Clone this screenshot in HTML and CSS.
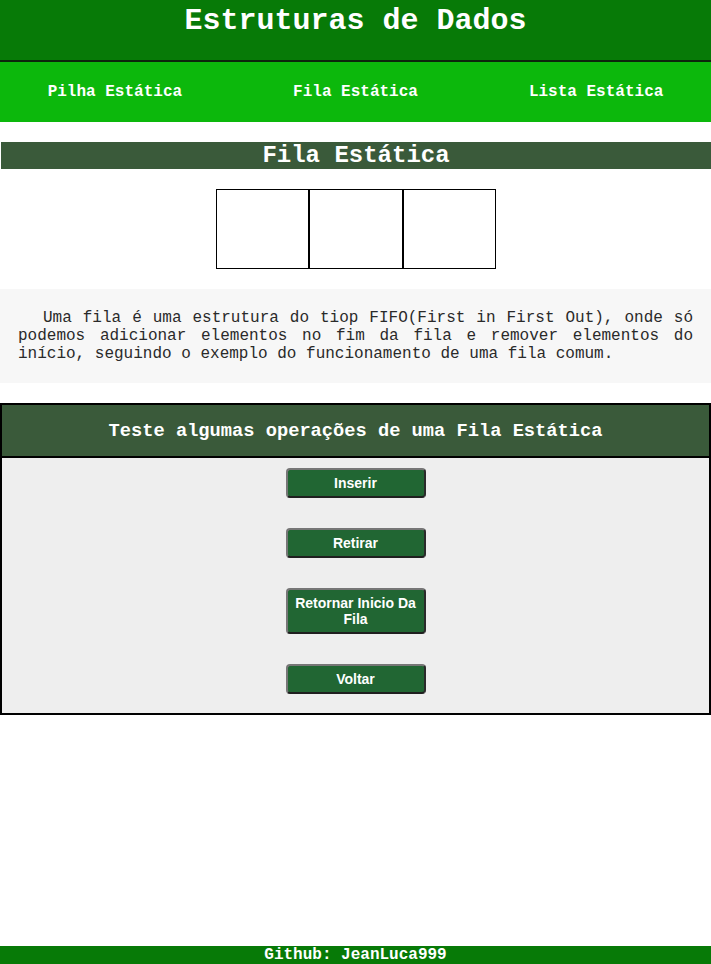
FILE: index.html
```
<!DOCTYPE html>
<html lang="pt-BR">
<head>
<meta charset="utf-8">
<title>Fila Estática</title>
<link rel="stylesheet" href="styles.css">
</head>
<body>
<header class="top">
  <h1 class="title">Estruturas de Dados</h1>
</header>
<nav class="nav">
  <a class="nav-link" href="#">Pilha Estática</a>
  <a class="nav-link" href="#">Fila Estática</a>
  <a class="nav-link" href="#">Lista Estática</a>
</nav>
<main class="main">
  <h2 class="section-title">Fila Estática</h2>
  <div class="queue">
    <div class="cell"></div>
    <div class="cell"></div>
    <div class="cell"></div>
  </div>
  <section class="desc">
    <p class="desc-text">Uma fila é uma estrutura do tiop FIFO(First in First Out), onde só podemos adicionar elementos no fim da fila e remover elementos do início, seguindo o exemplo do funcionamento de uma fila comum.</p>
  </section>
  <section class="panel">
    <div class="panel-head">
      <h3 class="panel-title">Teste algumas operações de uma Fila Estática</h3>
    </div>
    <div class="panel-body">
      <button class="btn">Inserir</button>
      <button class="btn">Retirar</button>
      <button class="btn">Retornar Inicio Da Fila</button>
      <button class="btn">Voltar</button>
    </div>
  </section>
</main>
<footer class="footer">Github: JeanLuca999</footer>
</body>
</html>
```
FILE: styles.css
```
* { box-sizing: border-box; }
html, body { margin: 0; padding: 0; }
body {
  font-family: "Liberation Mono", "Courier New", monospace;
  background: #ffffff;
  min-height: 100vh;
  display: flex;
  flex-direction: column;
}
.top {
  background: #077a07;
  height: 62px;
  border-bottom: 2px solid #0d260d;
}
.title {
  margin: 0;
  color: #ffffff;
  font-size: 30px;
  font-weight: bold;
  line-height: 42px;
  text-align: center;
}
.nav {
  background: #0cb80c;
  height: 60px;
  display: flex;
  justify-content: center;
  align-items: center;
  gap: 111px;
}
.nav-link {
  color: #ffffff;
  text-decoration: none;
  font-weight: bold;
  font-size: 16px;
  line-height: 18px;
}
.main {
  display: flex;
  flex-direction: column;
  padding-top: 20px;
}
.section-title {
  margin: 0 0 0 1px;
  background: #3a5a3a;
  color: #ffffff;
  font-size: 24px;
  font-weight: bold;
  line-height: 27px;
  height: 27px;
  text-align: center;
}
.queue {
  display: flex;
  justify-content: center;
  margin: 20px 0;
  padding-left: 1px;
}
.cell {
  width: 93.5px;
  height: 80px;
  border: 1px solid #000000;
}
.desc {
  background: #f7f7f7;
  padding: 20px 18px;
}
.desc-text {
  margin: 0;
  font-size: 16px;
  line-height: 18px;
  color: #2a2a2a;
  text-align: justify;
  text-indent: 25px;
}
.panel {
  margin-top: 20px;
  border: 2px solid #000000;
}
.panel-head {
  background: #3a5a3a;
  border-bottom: 2px solid #000000;
  height: 53px;
  display: flex;
  align-items: center;
  justify-content: center;
}
.panel-title {
  margin: 0;
  color: #ffffff;
  font-size: 18.72px;
  font-weight: bold;
  line-height: 22px;
}
.panel-body {
  background: #eeeeee;
  display: flex;
  flex-direction: column;
  align-items: center;
  gap: 30px;
  padding: 10px 0 19px;
}
.btn {
  width: 140px;
  background: #216633;
  color: #ffffff;
  font-family: "Liberation Sans", Arial, sans-serif;
  font-weight: bold;
  font-size: 14px;
  line-height: 16px;
  padding: 5px 6px;
  border: 2px solid;
  border-color: #767676 #2a2a2a #1f1f1f #767676;
  border-radius: 4px;
}
.footer {
  margin-top: auto;
  background: #077a07;
  color: #ffffff;
  font-weight: bold;
  font-size: 16px;
  line-height: 18px;
  height: 18px;
  text-align: center;
}
```
